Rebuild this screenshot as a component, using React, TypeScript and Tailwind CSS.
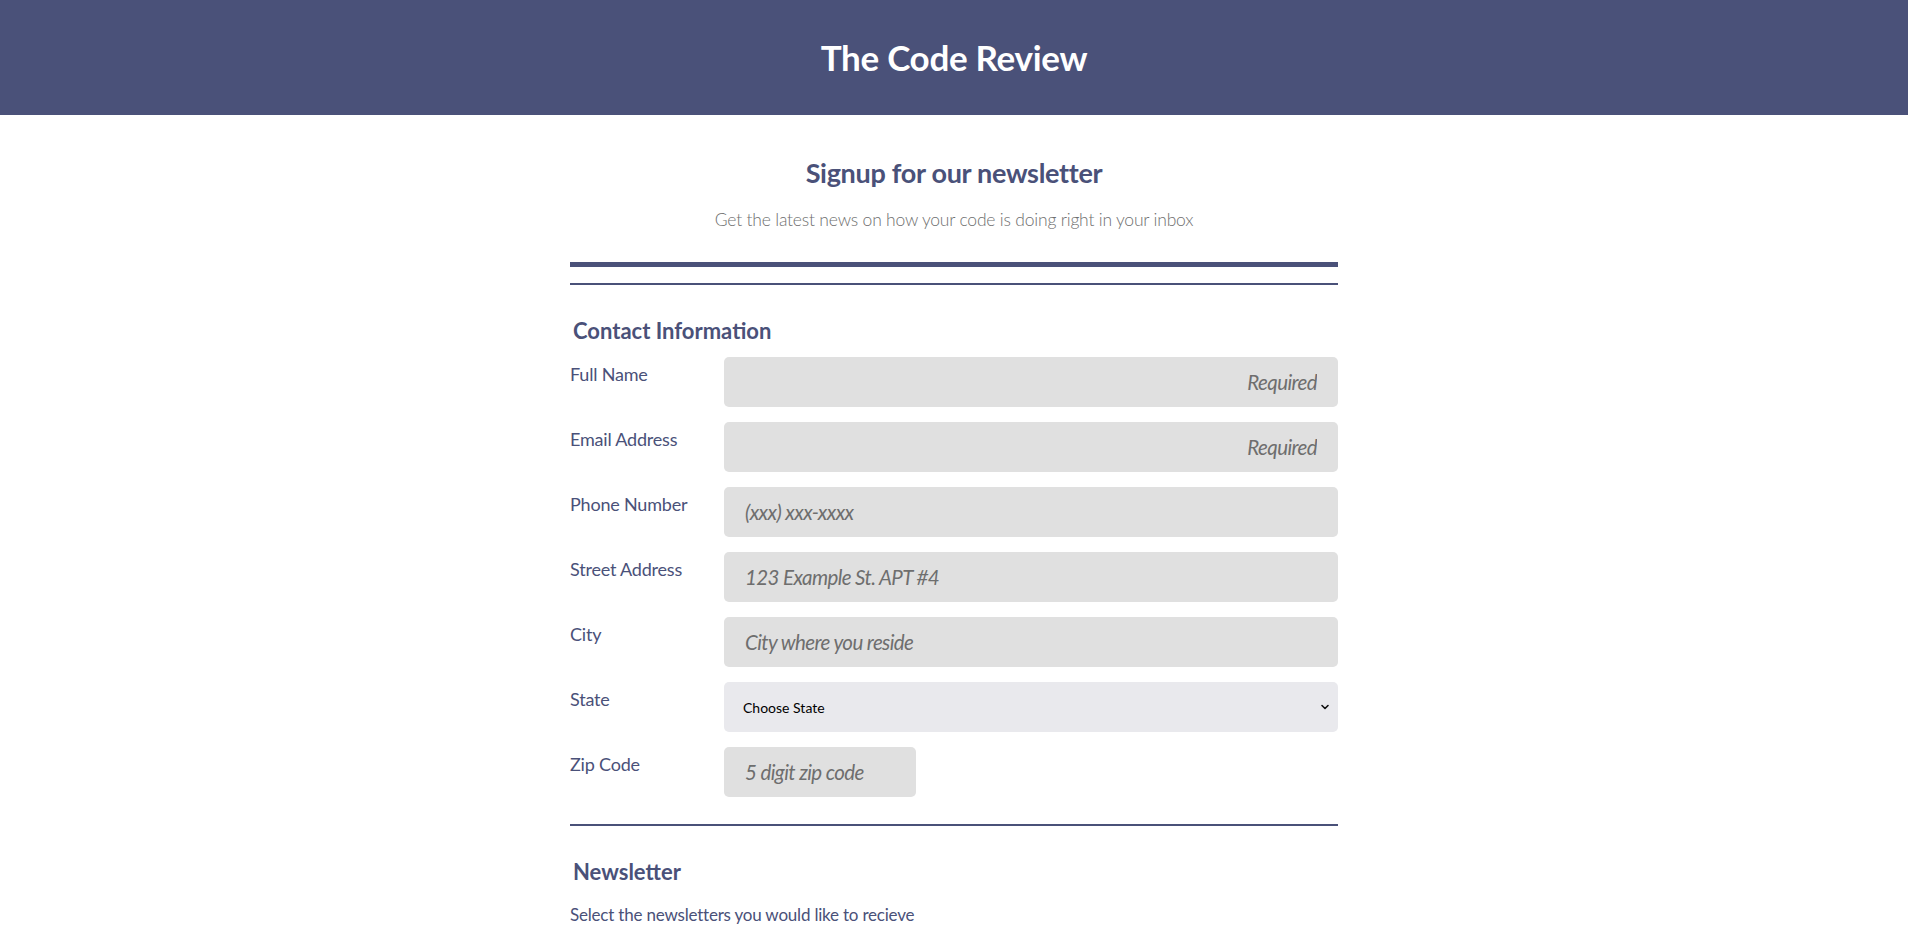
import React from 'react'

const rows = [
  { label: 'Full Name', placeholder: 'Required', right: true },
  { label: 'Email Address', placeholder: 'Required', right: true },
  { label: 'Phone Number', placeholder: '(xxx) xxx-xxxx' },
  { label: 'Street Address', placeholder: '123 Example St. APT #4' },
  { label: 'City', placeholder: 'City where you reside' },
]

function Field({ label, children }: { label: string; children: React.ReactNode }) {
  return (
    <div className="flex">
      <label className="w-[154px] shrink-0 pt-[4px] text-[18px] leading-[26px] text-[#4a5179] tracking-[-0.2px]">{label}</label>
      {children}
    </div>
  )
}

export default function App() {
  return (
    <div className="min-h-screen bg-white font-['Lato',sans-serif]">
      <header className="h-[115px] bg-[#4a5179] flex items-center justify-center">
        <h1 className="text-[35px] font-bold text-white tracking-[-0.3px]">The Code Review</h1>
      </header>

      <main className="mx-auto w-[768px] pb-10">
        <div className="text-center pt-[40px]">
          <h2 className="text-[27px] leading-[36px] font-bold text-[#4a5179] tracking-[-0.3px]">Signup for our newsletter</h2>
          <p className="mt-[16px] text-[17.5px] leading-[26px] font-light text-[#6f6f6f] tracking-[-0.2px]">
            Get the latest news on how your code is doing right in your inbox
          </p>
        </div>

        <div className="mt-[29px] h-[5px] bg-[#4a5179]" />
        <div className="mt-[16px] h-[2px] bg-[#4a5179]" />

        <section className="pt-[32px]">
          <h3 className="pl-[3px] text-[22px] leading-[28px] font-bold text-[#4a5179]">Contact Information</h3>

          <div className="mt-[12px] flex flex-col gap-[15px]">
            {rows.map((r) => (
              <Field key={r.label} label={r.label}>
                <input
                  placeholder={r.placeholder}
                  className={
                    'h-[50px] flex-1 rounded-[5px] bg-[#e0e0e0] px-[21px] text-[20.5px] italic text-[#333] tracking-[-0.6px] placeholder:text-[#6e6e6e] outline-none ' +
                    (r.right ? 'text-right' : '')
                  }
                />
              </Field>
            ))}

            <Field label="State">
              <div className="relative flex-1">
                <select className="h-[50px] w-full appearance-none rounded-[5px] bg-[#e9e9ed] px-[19px] text-[14px] text-black outline-none">
                  <option>Choose State</option>
                </select>
                <svg
                  className="pointer-events-none absolute right-[8px] top-1/2 -translate-y-1/2"
                  width="10"
                  height="10"
                  viewBox="0 0 10 10"
                  fill="none"
                >
                  <path d="M2 3.5 L5 6.5 L8 3.5" stroke="#111" strokeWidth="1.6" strokeLinecap="round" strokeLinejoin="round" />
                </svg>
              </div>
            </Field>

            <Field label="Zip Code">
              <input
                placeholder="5 digit zip code"
                className="h-[50px] w-[192px] rounded-[5px] bg-[#e0e0e0] px-[21px] text-[20.5px] italic text-[#333] tracking-[-0.6px] placeholder:text-[#6e6e6e] outline-none"
              />
            </Field>
          </div>
        </section>

        <div className="mt-[27px] h-[2px] bg-[#4a5179]" />

        <section className="pt-[32px]">
          <h3 className="pl-[3px] text-[22px] leading-[28px] font-bold text-[#4a5179]">Newsletter</h3>
          <p className="mt-[16px] text-[17px] leading-[26px] text-[#4a5179] tracking-[-0.2px]">Select the newsletters you would like to recieve</p>
        </section>
      </main>
    </div>
  )
}
